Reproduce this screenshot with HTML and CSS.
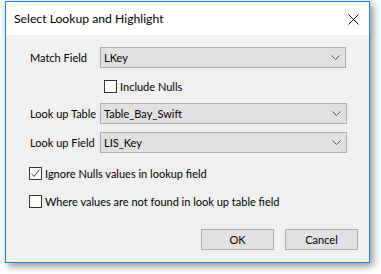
FILE: index.html
```html
<html><head>
<meta charset="UTF-8">
<title>Select Lookup and Highlight</title>
<link rel="stylesheet" href="styles.css">
</head>
<body>
  <div class="dialog">
    <div class="title-bar">
      <span class="title">Select Lookup and Highlight</span>
      <svg class="close" width="11" height="11" viewBox="0 0 11 11">
        <path d="M0.5 0.5 L10.5 10.5 M10.5 0.5 L0.5 10.5" stroke="#111" stroke-width="1" fill="none"/>
      </svg>
    </div>

    <div class="content">
      <div class="field-row row-match">
        <span class="label">Match Field</span>
        <div class="select">
          <span>LKey</span>
          <svg class="chevron" width="9" height="5" viewBox="0 0 9 5"><polyline points="0.5,0.5 4.5,4.5 8.5,0.5" stroke="#555" fill="none"/></svg>
        </div>
      </div>

      <label class="check-row row-nulls">
        <span class="box"></span>
        <span>Include Nulls</span>
      </label>

      <div class="field-row row-table">
        <span class="label">Look up Table</span>
        <div class="select">
          <span>Table_Bay_Swift</span>
          <svg class="chevron" width="9" height="5" viewBox="0 0 9 5"><polyline points="0.5,0.5 4.5,4.5 8.5,0.5" stroke="#555" fill="none"/></svg>
        </div>
      </div>

      <div class="field-row row-field">
        <span class="label">Look up Field</span>
        <div class="select">
          <span>LIS_Key</span>
          <svg class="chevron" width="9" height="5" viewBox="0 0 9 5"><polyline points="0.5,0.5 4.5,4.5 8.5,0.5" stroke="#555" fill="none"/></svg>
        </div>
      </div>

      <label class="check-row row-ignore">
        <span class="box checked">
          <svg width="11" height="11" viewBox="0 0 11 11"><polyline points="1.5,5.5 4,8.5 9.5,1.5" stroke="#444" fill="none"/></svg>
        </span>
        <span>Ignore Nulls values in lookup field</span>
      </label>

      <label class="check-row row-where">
        <span class="box"></span>
        <span>Where values are not found in look up table field</span>
      </label>

      <div class="buttons">
        <button class="btn">OK</button>
        <button class="btn">Cancel</button>
      </div>
    </div>
  </div>
</body></html>
```

FILE: styles.css
```css
body {
  margin: 0;
  background: #fff;
  font-family: 'Lato', 'Noto Sans', sans-serif;
  font-size: 11px;
  color: #000;
}

.dialog {
  margin: 1px 0 0 5px;
  width: 365px;
  height: 262px;
  box-sizing: border-box;
  border: 1px solid #1883d7;
  box-shadow: 3px 3px 8px rgba(0, 0, 0, 0.45);
  display: flex;
  flex-direction: column;
  background: #f0f0f0;
}

.title-bar {
  height: 33px;
  background: #fff;
  display: flex;
  align-items: center;
  justify-content: space-between;
  padding: 0 10px 0 8px;
}

.title {
  font-size: 12.2px;
}

.close {
  margin-top: 1px;
}

.content {
  flex: 1;
  padding: 12px 22px 0 24px;
  display: flex;
  flex-direction: column;
}

.field-row {
  display: grid;
  grid-template-columns: 70px 1fr;
  align-items: center;
}

.label {
  white-space: nowrap;
}

.row-table { margin-top: 10px; }
.row-field { margin-top: 8px; }

.select {
  height: 21px;
  box-sizing: border-box;
  border: 1px solid #adadad;
  background: #e1e1e1;
  display: flex;
  align-items: center;
  justify-content: space-between;
  padding: 0 5px 0 3px;
}

.row-match .select {
  margin-right: 1px;
}

.check-row {
  display: flex;
  align-items: center;
  gap: 3px;
  height: 13px;
  white-space: nowrap;
}

.row-nulls { margin: 12px 0 0 74px; }
.row-ignore { margin: 14px 0 0 -1px; }
.row-where { margin: 15px 0 0 -1px; }

.box {
  width: 13px;
  height: 13px;
  box-sizing: border-box;
  border: 1px solid #333;
  background: #fff;
  display: flex;
  align-items: center;
  justify-content: center;
}

.buttons {
  margin-top: 21px;
  display: flex;
  justify-content: flex-end;
  gap: 11px;
  margin-right: -11px;
}

.btn {
  width: 73px;
  height: 21px;
  border: 1px solid #adadad;
  background: #e1e1e1;
  font-family: inherit;
  font-size: 11px;
  color: #000;
  padding: 0;
}
```
